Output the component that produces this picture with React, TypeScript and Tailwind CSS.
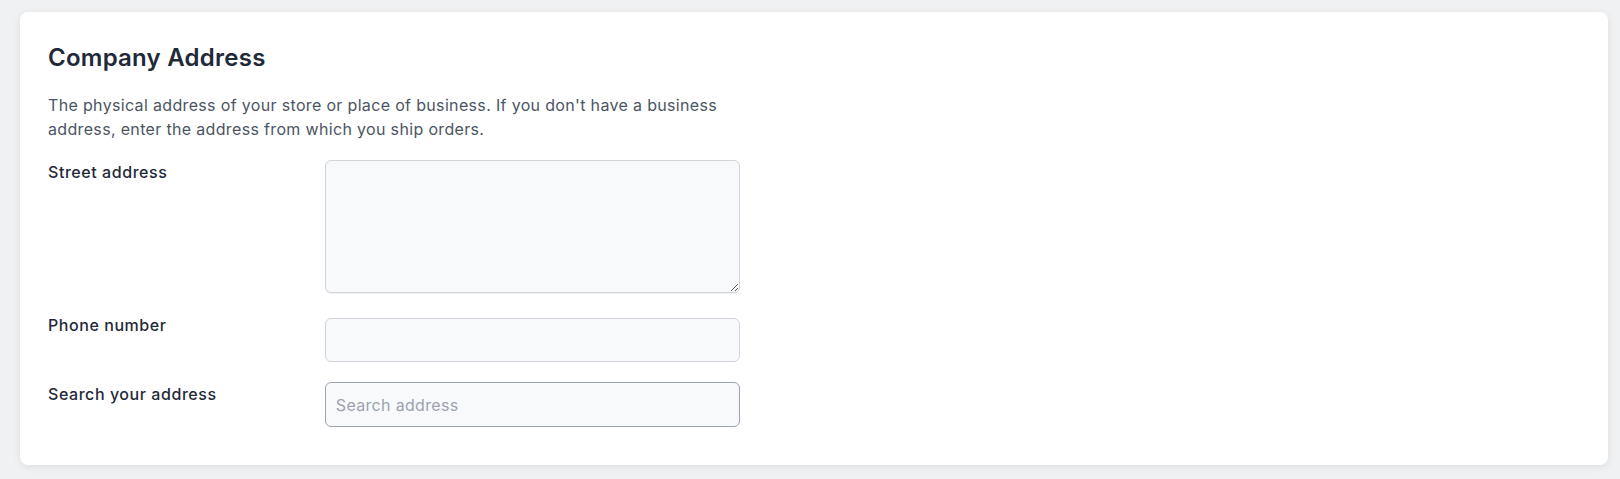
import React from 'react';

const Row: React.FC<{ label: string; labelClass?: string; className?: string; children: React.ReactNode }> = ({
  label,
  labelClass = '',
  className = '',
  children,
}) => (
  <div className={`flex ${className}`}>
    <label className={`w-2/5 text-base leading-6 font-medium tracking-[0.035em] text-[#1f2937] ${labelClass}`}>
      {label}
    </label>
    <div className="w-3/5">{children}</div>
  </div>
);

export default function App() {
  return (
    <div className="min-h-[479px] bg-[#f0f1f3] pl-5 pr-3 pt-3 pb-[13px] font-['Inter',sans-serif]">
      <div className="bg-white rounded-lg shadow-[0_2px_8px_rgba(0,0,0,0.08)] px-7 pt-[30px] pb-[38px]">
        <div className="max-w-[692px]">
          <h2 className="text-2xl leading-8 font-semibold tracking-[0.01em] text-[#1f2937]">Company Address</h2>
          <p className="mt-[19px] text-base leading-6 tracking-[0.021em] text-[#4b5563]">
            The physical address of your store or place of business. If you don't have a business address, enter the
            address from which you ship orders.
          </p>

          <Row label="Street address" className="mt-[19px]">
            <textarea className="block w-full h-[133px] rounded-md border border-[#d1d5db] bg-[#f8f9fa] shadow-[0_1px_1px_rgba(0,0,0,0.06)] px-2.5 py-2 text-base outline-none" />
          </Row>

          <Row label="Phone number" labelClass="-mt-[5px]" className="mt-[25px]">
            <input
              type="text"
              className="block w-full h-[44px] rounded-md border border-[#d1d5db] bg-[#f8f9fa] px-2.5 text-base outline-none"
            />
          </Row>

          <Row label="Search your address" className="mt-[20px]">
            <input
              type="text"
              placeholder="Search address"
              className="block w-full h-[45px] rounded-md border border-[#9ca3af] bg-[#f8f9fa] px-2.5 text-base tracking-[0.02em] text-[#1f2937] placeholder:text-[#9ca3af] outline-none"
            />
          </Row>
        </div>
      </div>
    </div>
  );
}
